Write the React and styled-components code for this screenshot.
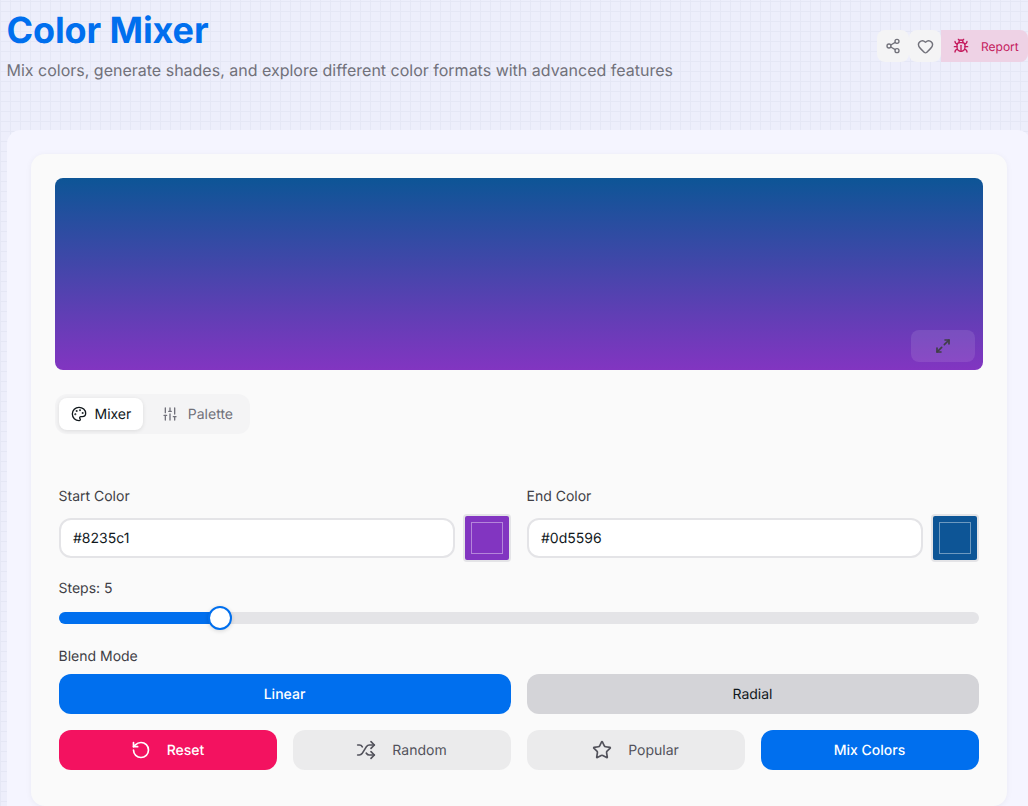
import React from "react";
import styled, { createGlobalStyle } from "styled-components";
import { Share2, Heart, Bug, Palette, SlidersVertical, Maximize2, RotateCcw, Shuffle, Star } from "lucide-react";

const Global = createGlobalStyle`
  html, body { margin: 0; padding: 0; }
  body {
    font-family: Inter, "Noto Sans", sans-serif;
    background-color: #edeefb;
    overflow: hidden;
    height: 806px;
    text-rendering: geometricPrecision;
  }
  button { text-rendering: geometricPrecision; }
  * { box-sizing: border-box; }
`;

const Page = styled.div`
  width: 1028px;
  height: 806px;
  overflow: hidden;
  background-color: #edeefb;
  background-image:
    linear-gradient(to right, #e5e7f5 1px, transparent 1px),
    linear-gradient(to bottom, #e5e7f5 1px, transparent 1px);
  background-size: 10px 10px;
  background-position: 0 1px;
`;

const Header = styled.header`
  display: flex;
  justify-content: space-between;
  align-items: flex-start;
  height: 130px;
  width: 1028px;
  padding-left: 6.5px;
`;

const TitleBlock = styled.div`
  display: flex;
  flex-direction: column;
`;

const Title = styled.h1`
  margin: 8px 0 0;
  font-size: 36px;
  line-height: 44px;
  font-weight: 700;
  letter-spacing: -0.12px;
  color: #006fee;
`;

const Subtitle = styled.p`
  margin: 6px 0 0;
  font-size: 16px;
  line-height: 24px;
  color: #71717a;
`;

const HeaderActions = styled.div`
  display: flex;
  margin-top: 30px;
`;

const IconAction = styled.button`
  width: 32px;
  height: 32px;
  border: 0;
  padding: 0;
  border-radius: 8px;
  background: #f4f4f5;
  color: #71717a;
  display: flex;
  align-items: center;
  justify-content: center;
`;

const ReportAction = styled.button`
  width: 87px;
  height: 32px;
  border: 0;
  padding: 0 0 0 12px;
  border-radius: 0 8px 8px 0;
  background: #eed2e5;
  color: #c4195c;
  font: 400 12px Inter, sans-serif;
  display: flex;
  align-items: center;
  gap: 12px;
`;

const OuterCard = styled.section`
  width: 1024px;
  height: 700px;
  margin-left: 7px;
  padding: 24px;
  border-radius: 14px;
  background: #f5f5ff;
`;

const InnerCard = styled.div`
  width: 976px;
  height: 652px;
  padding: 24px;
  border-radius: 14px;
  background: #fafafa;
  box-shadow: 0 1px 6px rgba(0, 0, 0, 0.05);
`;

const Preview = styled.div`
  position: relative;
  height: 192px;
  border-radius: 8px;
  background: linear-gradient(to top, #8235c1, #0d5596);
`;

const ExpandButton = styled.button`
  position: absolute;
  right: 8px;
  bottom: 8px;
  width: 64px;
  height: 32px;
  border: 0;
  padding: 0;
  border-radius: 8px;
  background: rgba(255, 255, 255, 0.1);
  color: #3f3f46;
  display: flex;
  align-items: center;
  justify-content: center;
`;

const Tabs = styled.div`
  display: inline-flex;
  gap: 8px;
  margin: 24px 0 0;
  padding: 4px 5px 4px 4px;
  height: 40px;
  border-radius: 12px;
  background: #f4f4f5;
`;

const Tab = styled.div`
  display: flex;
  align-items: center;
  gap: ${(p) => (p.$active ? "8px" : "9.5px")};
  height: 32px;
  padding: 0 11.5px;
  border-radius: 8px;
  font-size: 14px;
  background: ${(p) => (p.$active ? "#ffffff" : "transparent")};
  color: ${(p) => (p.$active ? "#11181c" : "#71717a")};
  box-shadow: ${(p) => (p.$active ? "0 1px 4px rgba(0,0,0,0.1)" : "none")};
`;

const Form = styled.div`
  display: flex;
  flex-direction: column;
  padding: 0 4px;
  margin-top: 52px;
`;

const ColorRow = styled.div`
  display: grid;
  grid-template-columns: 1fr 1fr;
  gap: 16px;
`;

const Label = styled.div`
  height: 20px;
  margin-left: -0.5px;
  font-size: 14px;
  line-height: 22px;
  color: #3f3f46;
`;

const InputRow = styled.div`
  display: flex;
  align-items: center;
  gap: 8px;
  margin-top: 8px;
`;

const TextInput = styled.div`
  flex: 1;
  height: 40px;
  padding: 0 12px;
  display: flex;
  align-items: center;
  border: 2px solid #e4e4e7;
  border-radius: 12px;
  background: #ffffff;
  font-size: 14px;
  color: #11181c;
`;

const Swatch = styled.div`
  width: 48px;
  height: 48px;
  padding: 6px;
  border: 2px solid #e4e4e7;
  border-radius: 4px;
  background: ${(p) => p.$color};
`;

const SwatchInner = styled.div`
  width: 100%;
  height: 100%;
  border: 1px solid rgba(255, 255, 255, 0.4);
`;

const StepsLabel = styled(Label)`
  margin-top: 16px;
`;

const SliderTrack = styled.div`
  position: relative;
  height: 12px;
  margin-top: 14px;
  border-radius: 6px;
  background: #e4e4e7;
`;

const SliderFill = styled.div`
  height: 100%;
  border-radius: 6px;
  background: #006fee;
`;

const SliderThumb = styled.div`
  position: absolute;
  top: -6px;
  width: 24px;
  height: 24px;
  border-radius: 50%;
  border: 2px solid #006fee;
  background: #ffffff;
  box-shadow: 0 1px 4px rgba(0, 0, 0, 0.15);
`;

const BlendLabel = styled(Label)`
  margin-top: 22px;
`;

const BlendRow = styled.div`
  display: grid;
  grid-template-columns: 1fr 1fr;
  gap: 16px;
  margin-top: 8px;
`;

const ActionRow = styled.div`
  display: grid;
  grid-template-columns: repeat(4, 1fr);
  gap: 16px;
  margin-top: 16px;
`;

const tones = {
  primary: "background:#006fee;color:#fff;font-weight:500;",
  danger: "background:#f31260;color:#fff;font-weight:500;",
  soft: "background:#ebebec;color:#52525b;font-weight:400;",
  neutral: "background:#d4d4d8;color:#11181c;font-weight:400;",
};

const Button = styled.button`
  height: 40px;
  border: 0;
  border-radius: 12px;
  padding: 0 1px 0 0;
  display: flex;
  align-items: center;
  justify-content: center;
  gap: 16px;
  font-family: Inter, sans-serif;
  font-size: 14px;
  ${(p) => tones[p.$tone]}
`;

export default function App() {
  return (
    <Page>
      <Global />
      <Header>
        <TitleBlock>
          <Title>Color Mixer</Title>
          <Subtitle>Mix colors, generate shades, and explore different color formats with advanced features</Subtitle>
        </TitleBlock>
        <HeaderActions>
          <IconAction><Share2 size={16} /></IconAction>
          <IconAction><Heart size={17} /></IconAction>
          <ReportAction><Bug size={16} />Report</ReportAction>
        </HeaderActions>
      </Header>
      <OuterCard>
        <InnerCard>
          <Preview>
            <ExpandButton><Maximize2 size={16} strokeWidth={2.5} /></ExpandButton>
          </Preview>
          <Tabs>
            <Tab $active><Palette size={16} />Mixer</Tab>
            <Tab><SlidersVertical size={16} />Palette</Tab>
          </Tabs>
          <Form>
            <ColorRow>
              <div>
                <Label>Start Color</Label>
                <InputRow>
                  <TextInput>#8235c1</TextInput>
                  <Swatch $color="#8235c1"><SwatchInner /></Swatch>
                </InputRow>
              </div>
              <div>
                <Label>End Color</Label>
                <InputRow>
                  <TextInput>#0d5596</TextInput>
                  <Swatch $color="#0d5596"><SwatchInner /></Swatch>
                </InputRow>
              </div>
            </ColorRow>
            <StepsLabel>Steps: 5</StepsLabel>
            <SliderTrack>
              <SliderFill style={{ width: "162px" }} />
              <SliderThumb style={{ left: "149px" }} />
            </SliderTrack>
            <BlendLabel>Blend Mode</BlendLabel>
            <BlendRow>
              <Button $tone="primary">Linear</Button>
              <Button $tone="neutral">Radial</Button>
            </BlendRow>
            <ActionRow>
              <Button $tone="danger"><RotateCcw size={20} />Reset</Button>
              <Button $tone="soft"><Shuffle size={20} />Random</Button>
              <Button $tone="soft"><Star size={20} />Popular</Button>
              <Button $tone="primary">Mix Colors</Button>
            </ActionRow>
          </Form>
        </InnerCard>
      </OuterCard>
    </Page>
  );
}
